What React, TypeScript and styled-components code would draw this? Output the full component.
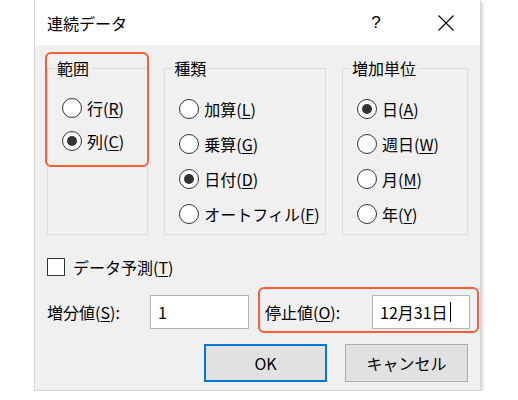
import React from "react";
import styled, { createGlobalStyle } from "styled-components";

const GlobalStyle = createGlobalStyle`
  body {
    margin: 0;
    background: #ffffff;
    font-family: "Noto Sans CJK JP", "Noto Sans", sans-serif;
    color: #000000;
  }
`;

const Dialog = styled.div`
  margin-left: 34px;
  width: 445px;
  height: 390px;
  background: #f0f0f0;
  border: 1px solid #d6d6d6;
  border-top: none;
  box-shadow: 2px 2px 3px rgba(0, 0, 0, 0.16);
  display: flex;
  flex-direction: column;
`;

const TitleBar = styled.div`
  height: 45px;
  background: #ffffff;
  display: flex;
  align-items: center;
  padding: 0 26px 0 12px;
  font-size: 16px;
`;

const Title = styled.div`
  flex: 1;
  line-height: 20px;
`;

const HelpButton = styled.div`
  width: 20px;
  text-align: center;
  font-size: 17px;
  line-height: 20px;
  margin-right: 52px;
  font-family: "Liberation Sans", sans-serif;
`;

const Body = styled.div`
  padding: 23px 12px 0 12px;
  display: flex;
  flex-direction: column;
  font-size: 16px;
`;

const GroupRow = styled.div`
  display: flex;
  gap: 16px;
`;

const Group = styled.div<{ $width: number; $rowHeight: number }>`
  position: relative;
  width: ${({ $width }) => $width}px;
  height: 167px;
  box-sizing: border-box;
  border: 1px solid #dcdcdc;
  padding: 22px 0 0 14px;

  & > div[data-row] {
    height: ${({ $rowHeight }) => $rowHeight}px;
  }
`;

const Legend = styled.span`
  position: absolute;
  top: -9px;
  left: 7px;
  padding: 0 2px;
  background: #f0f0f0;
  line-height: 16px;
`;

const Highlight = styled.div<{ $top: number; $left: number; $right: number; $bottom: number }>`
  position: absolute;
  top: ${({ $top }) => $top}px;
  left: ${({ $left }) => $left}px;
  right: ${({ $right }) => $right}px;
  bottom: ${({ $bottom }) => $bottom}px;
  border: 2.5px solid #fb5d38;
  border-radius: 6px;
  pointer-events: none;
`;

const RadioRow = styled.div`
  display: flex;
  align-items: center;
  gap: 5px;
  white-space: nowrap;
`;

const RadioCircle = styled.span<{ $checked?: boolean }>`
  width: 20px;
  height: 20px;
  box-sizing: border-box;
  border: 1px solid #333333;
  border-radius: 50%;
  background: #ffffff;
  display: flex;
  align-items: center;
  justify-content: center;

  &::after {
    content: "";
    width: 10px;
    height: 10px;
    border-radius: 50%;
    background: #333333;
    display: ${({ $checked }) => ($checked ? "block" : "none")};
  }
`;

const Accel = styled.span`
  text-decoration: underline;
  text-underline-offset: 2px;
  text-decoration-thickness: 1px;
`;

const CheckRow = styled.div`
  margin-top: 23px;
  display: flex;
  align-items: center;
  gap: 8px;
  height: 18px;
`;

const CheckBox = styled.span`
  width: 18px;
  height: 18px;
  box-sizing: border-box;
  border: 1px solid #333333;
  background: #ffffff;
`;

const FieldRow = styled.div`
  margin-top: 19px;
  display: flex;
  align-items: center;
  gap: 16px;
`;

const Field = styled.div`
  position: relative;
  display: flex;
  align-items: center;
`;

const FieldLabel = styled.span<{ $width: number }>`
  width: ${({ $width }) => $width}px;
  white-space: nowrap;
`;

const TextBox = styled.div<{ $width: number }>`
  width: ${({ $width }) => $width}px;
  height: 34px;
  box-sizing: border-box;
  border: 1px solid #b4b4b4;
  background: #ffffff;
  padding: 0 7px;
  display: flex;
  align-items: center;
  font-size: 16px;
`;

const Caret = styled.span`
  display: inline-block;
  width: 1px;
  height: 20px;
  background: #000000;
  margin-left: 2px;
`;

const ButtonRow = styled.div`
  margin-top: 15px;
  display: flex;
  justify-content: flex-end;
  gap: 18px;
`;

const Button = styled.div<{ $primary?: boolean }>`
  width: 123px;
  height: 38px;
  box-sizing: border-box;
  background: #e1e1e1;
  border: ${({ $primary }) => ($primary ? "2px solid #0078d7" : "1px solid #adadad")};
  display: flex;
  align-items: center;
  justify-content: center;
  font-size: 16px;
`;

type RadioItem = { label: string; key: string; checked?: boolean };

const groups: {
  title: string;
  width: number;
  rowHeight: number;
  items: RadioItem[];
  highlight?: boolean;
}[] = [
  {
    title: "範囲",
    width: 102,
    rowHeight: 33,
    highlight: true,
    items: [
      { label: "行", key: "R" },
      { label: "列", key: "C", checked: true },
    ],
  },
  {
    title: "種類",
    width: 163,
    rowHeight: 35,
    items: [
      { label: "加算", key: "L" },
      { label: "乗算", key: "G" },
      { label: "日付", key: "D", checked: true },
      { label: "オートフィル", key: "F" },
    ],
  },
  {
    title: "増加単位",
    width: 127,
    rowHeight: 35,
    items: [
      { label: "日", key: "A", checked: true },
      { label: "週日", key: "W" },
      { label: "月", key: "M" },
      { label: "年", key: "Y" },
    ],
  },
];

const CloseIcon = () => (
  <svg width="16" height="16" viewBox="0 0 16 16">
    <path d="M0.5 0.5 L15.5 15.5 M15.5 0.5 L0.5 15.5" stroke="#000" strokeWidth="1.1" fill="none" />
  </svg>
);

const App: React.FC = () => {
  return (
    <>
      <GlobalStyle />
      <Dialog>
        <TitleBar>
          <Title>連続データ</Title>
          <HelpButton>?</HelpButton>
          <CloseIcon />
        </TitleBar>
        <Body>
          <GroupRow>
            {groups.map((g) => (
              <Group key={g.title} $width={g.width} $rowHeight={g.rowHeight}>
                <Legend>{g.title}</Legend>
                {g.items.map((item) => (
                  <RadioRow key={item.key} data-row>
                    <RadioCircle $checked={item.checked} />
                    <span>
                      {item.label}(<Accel>{item.key}</Accel>)
                    </span>
                  </RadioRow>
                ))}
                {g.highlight && <Highlight $top={-17} $left={-3} $right={-2} $bottom={67} />}
              </Group>
            ))}
          </GroupRow>
          <CheckRow>
            <CheckBox />
            <span>
              データ予測(<Accel>T</Accel>)
            </span>
          </CheckRow>
          <FieldRow>
            <Field>
              <FieldLabel $width={103}>
                増分値(<Accel>S</Accel>):
              </FieldLabel>
              <TextBox $width={99}>1</TextBox>
            </Field>
            <Field>
              <FieldLabel $width={107}>
                停止値(<Accel>O</Accel>):
              </FieldLabel>
              <TextBox $width={98}>
                12月31日
                <Caret />
              </TextBox>
              <Highlight $top={-8} $left={-7} $right={-9} $bottom={-4} />
            </Field>
          </FieldRow>
          <ButtonRow>
            <Button $primary>OK</Button>
            <Button>キャンセル</Button>
          </ButtonRow>
        </Body>
      </Dialog>
    </>
  );
};

export default App;
